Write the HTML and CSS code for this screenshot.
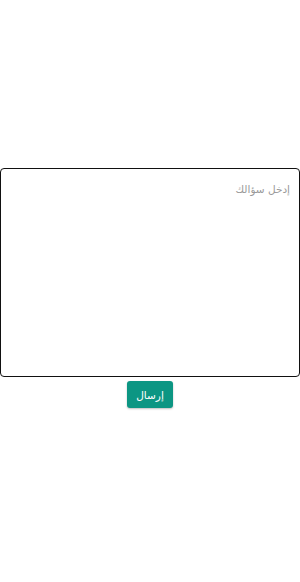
FILE: index.html
```html
<!DOCTYPE html>
<html lang="ar" dir="rtl">
<head>
    <meta charset="UTF-8">
    <meta name="viewport" content="width=device-width, initial-scale=1.0">
    <title>سؤال</title>
    <link rel="stylesheet" href="styles.css">
</head>
<body>
    <div class="wrap">
        <textarea class="question" placeholder="إدخل سؤالك"></textarea>
        <button class="send">إرسال</button>
    </div>
</body>
</html>
```

FILE: styles.css
```css
html, body {
    margin: 0;
    padding: 0;
    height: 100%;
}
body {
    font-family: "DejaVu Sans", sans-serif;
    background: #fff;
}
.wrap {
    display: flex;
    flex-direction: column;
    align-items: center;
    justify-content: center;
    min-height: 100%;
    padding-bottom: 6px;
    box-sizing: border-box;
}
.question {
    display: block;
    width: 100%;
    height: 209px;
    box-sizing: border-box;
    margin: 0;
    padding: 14px 9px;
    border: 1.5px solid #111;
    border-radius: 4px;
    font-family: inherit;
    font-size: 10.5px;
    resize: none;
    outline: none;
}
.question::placeholder {
    color: #9a9a9a;
}
.send {
    margin-top: 4px;
    width: 46px;
    height: 27px;
    padding: 0;
    border: none;
    border-radius: 3px;
    background: #0c9683;
    color: #fff;
    font-family: inherit;
    font-size: 10.5px;
    box-shadow: 0 1px 2px rgba(0,0,0,.25);
}
```
